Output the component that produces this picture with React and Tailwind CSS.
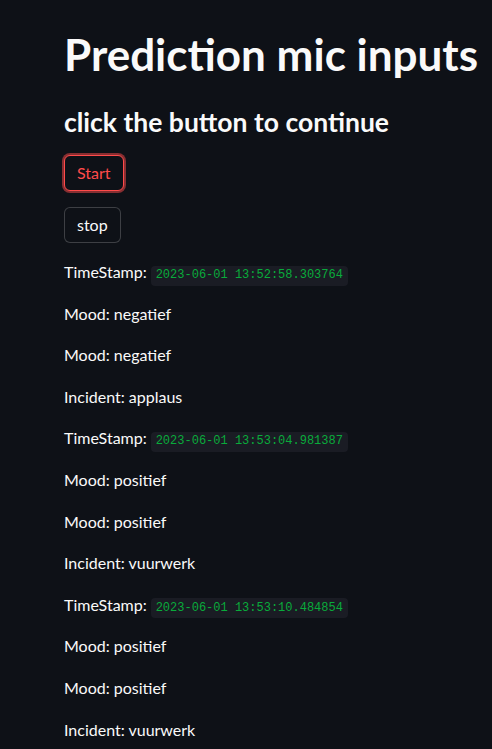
import React from 'react';

const entries = [
  { ts: '2023-06-01 13:52:58.303764', mood: 'negatief', incident: 'applaus' },
  { ts: '2023-06-01 13:53:04.981387', mood: 'positief', incident: 'vuurwerk' },
  { ts: '2023-06-01 13:53:10.484854', mood: 'positief', incident: 'vuurwerk' },
];

const sans = "font-['Lato','Noto_Sans',sans-serif]";

function Row({ children }) {
  return <p className="m-0 h-[25.6px] text-[16px] leading-[25.6px] text-[#fafafa]">{children}</p>;
}

export default function App() {
  return (
    <div className={`h-[749px] w-[492px] overflow-hidden bg-[#0e1117] pl-[64px] ${sans}`}>
      <h1 className="m-0 whitespace-nowrap pt-[25px] text-[44px] font-bold leading-[58px] text-[#fafafa]">
        Prediction mic inputs
      </h1>
      <h2 className="m-0 mt-[22px] whitespace-nowrap text-[26.5px] font-bold leading-[34px] text-[#fafafa]">
        click the button to continue
      </h2>

      <div className="mt-[16px] flex flex-col items-start gap-4">
        <button className="flex h-[36px] items-center rounded-[6px] border border-[#ff4b4b] bg-[#0e1117] px-3 text-[16px] text-[#ff4b4b] shadow-[0_0_0_2px_rgba(255,75,75,0.5)]">
          Start
        </button>
        <button className="flex h-[36px] items-center rounded-[6px] border border-[rgba(250,250,250,0.2)] bg-[#0e1117] px-3 text-[16px] text-[#fafafa]">
          stop
        </button>

        {entries.map((e) => (
          <React.Fragment key={e.ts}>
            <Row>
              TimeStamp:{' '}
              <code className="inline-block rounded-[4px] bg-[#1a1c24] px-[4.8px] py-[2.5px] font-['Liberation_Mono','DejaVu_Sans_Mono',monospace] text-[12px] leading-[15px] text-[#09ab3b]">
                {e.ts}
              </code>
            </Row>
            <Row>Mood: {e.mood}</Row>
            <Row>Mood: {e.mood}</Row>
            <Row>Incident: {e.incident}</Row>
          </React.Fragment>
        ))}
      </div>
    </div>
  );
}
